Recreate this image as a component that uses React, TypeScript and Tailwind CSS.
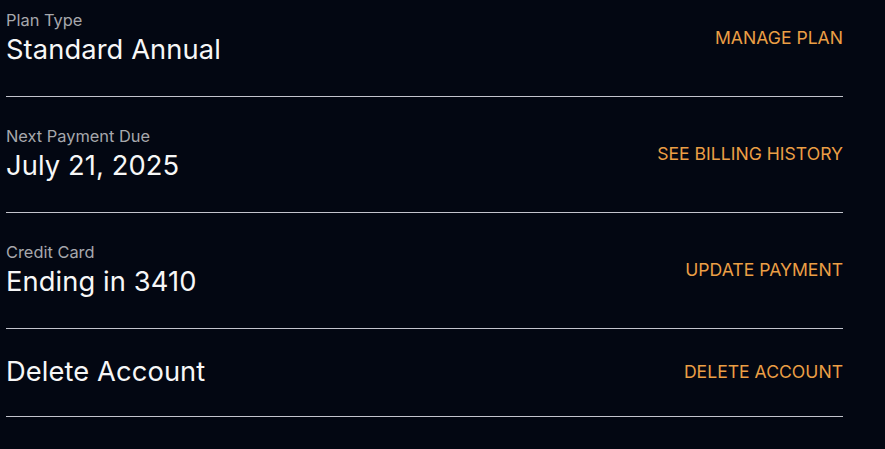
const rows = [
  { label: 'Plan Type', value: 'Standard Annual', action: 'MANAGE PLAN' },
  { label: 'Next Payment Due', value: 'July 21, 2025', action: 'SEE BILLING HISTORY' },
  { label: 'Credit Card', value: 'Ending in 3410', action: 'UPDATE PAYMENT' },
  { label: null, value: 'Delete Account', action: 'DELETE ACCOUNT' },
]

export default function App() {
  return (
    <div
      className="min-h-[449px] w-full bg-[#030712] text-[#f7f7f7]"
      style={{ fontFamily: 'Inter, "Noto Sans", sans-serif' }}
    >
      <div className="ml-[6px] w-[837px]">
        {rows.map((row, i) => (
          <div
            key={row.value}
            className={`flex items-center justify-between border-b border-[#c3c4cc] pb-[30px] ${
              i === 0 ? 'pt-[10px]' : 'pt-[29px]'
            }`}
          >
            <div>
              {row.label && (
                <p className="text-[16.4px] leading-[20px] text-[#a7a8ad]">{row.label}</p>
              )}
              <p
                className={`text-[27.3px] tracking-[0.1px] ${
                  row.label ? 'mt-[4px] leading-[32px]' : 'leading-[28px]'
                }`}
              >
                {row.value}
              </p>
            </div>
            <button className="text-[17.6px] text-[#eb9f45]">{row.action}</button>
          </div>
        ))}
      </div>
    </div>
  )
}
